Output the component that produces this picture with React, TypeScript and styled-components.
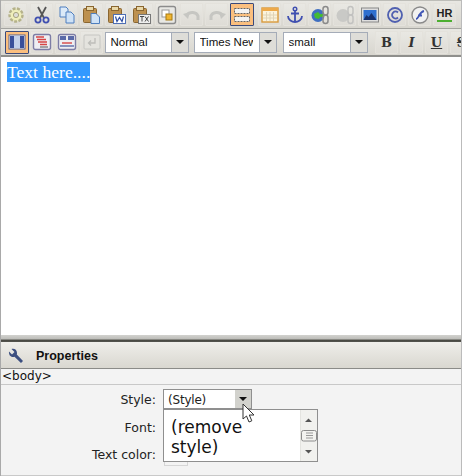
import React from "react";
import styled, { createGlobalStyle } from "styled-components";

const GlobalStyle = createGlobalStyle`
  html, body { margin: 0; padding: 0; background: #fff; }
  * { box-sizing: border-box; }
`;

const Editor = styled.div`
  width: 462px;
  height: 476px;
  display: flex;
  flex-direction: column;
  border-left: 1px solid #a9a9a9;
  border-right: 1px solid #bbb;
  font-family: "DejaVu Sans", Verdana, sans-serif;
  overflow: hidden;
`;

const Toolbars = styled.div`
  flex: none;
  height: 57px;
  background: #d8d6cf;
  border-top: 1px solid #bdbdb8;
  border-bottom: 2px solid #8f8f8c;
  display: flex;
  flex-direction: column;
`;

const ToolRow = styled.div<{ $top?: boolean; $pad: number }>`
  flex: none;
  height: ${(p) => (p.$top ? 28 : 26)}px;
  display: flex;
  align-items: center;
  padding-left: ${(p) => p.$pad}px;
  background: linear-gradient(#e8e7e2, #d8d6cf);
  border-bottom: ${(p) => (p.$top ? "1px solid #a4a4a0" : "none")};
  overflow: hidden;
`;

const ToolButton = styled.div<{ $active?: boolean; $w?: number; $gap?: number; $lead?: number }>`
  flex: none;
  width: ${(p) => p.$w ?? 23}px;
  height: 23px;
  display: flex;
  align-items: center;
  justify-content: center;
  margin-left: ${(p) => p.$lead ?? 0}px;
  margin-right: ${(p) => p.$gap ?? 2}px;
  border: 1px solid ${(p) => (p.$active ? "#3c4a7a" : "#e4e2dc")};
  background: ${(p) => (p.$active ? "#fbbf7e" : "linear-gradient(#e9e8e3, #dedcd6)")};
  border-radius: 1px;
`;

const Combo = styled.div<{ $w: number; $ml: number }>`
  flex: none;
  width: ${(p) => p.$w}px;
  margin-left: ${(p) => p.$ml}px;
  height: 21px;
  display: flex;
  border: 1px solid #a5acb8;
  background: #fff;
`;

const ComboText = styled.div`
  flex: 1;
  min-width: 0;
  overflow: hidden;
  white-space: nowrap;
  margin-left: 4.5px;
  margin-right: 6px;
  font-family: "Liberation Sans", Arial, sans-serif;
  font-size: 11.5px;
  line-height: 19px;
  color: #111;
`;

const ComboArrow = styled.div`
  flex: none;
  width: 17px;
  background: #deddd8;
  border-left: 1px solid #a5acb8;
  display: flex;
  align-items: center;
  justify-content: center;
  &::after {
    content: "";
    border-left: 4px solid transparent;
    border-right: 4px solid transparent;
    border-top: 4px solid #111;
  }
`;

const Canvas = styled.div`
  flex: none;
  height: 278px;
  background: #fff;
  padding: 5px 6px;
  font-family: "Liberation Serif", "Times New Roman", serif;
  font-size: 17.6px;
  line-height: 20px;
`;

const Selected = styled.span`
  background: #3399ff;
  color: #fff;
`;

const Splitter = styled.div`
  flex: none;
  height: 7px;
  background: linear-gradient(#d2d2cf 0, #bcbcb8 60%, #45453f 70%, #55554f 100%);
`;

const PanelHeader = styled.div`
  flex: none;
  height: 27px;
  display: flex;
  align-items: center;
  gap: 12px;
  padding: 2px 0 0 7px;
  background: linear-gradient(#efeeea, #d9d7d0);
  border-bottom: 1px solid #8b8b88;
  font-family: "Liberation Sans", Arial, sans-serif;
  font-size: 12.5px;
  font-weight: bold;
  color: #111;
`;

const PathBar = styled.div`
  flex: none;
  height: 16px;
  background: #f3f3f3;
  border-bottom: 1px solid #c8c8c8;
  padding-left: 1px;
  font-size: 12px;
  line-height: 15px;
  color: #111;
`;

const Form = styled.div`
  flex: 1;
  position: relative;
  background: #f3f3f3;
  padding-top: 4px;
  border-bottom: 1px solid #c9c9c9;
  display: grid;
  grid-template-columns: 155px 1fr;
  grid-auto-rows: 27.5px;
  column-gap: 7px;
  font-size: 12.5px;
  color: #222;
`;

const Label = styled.div`
  text-align: right;
  line-height: 20px;
  padding-top: 1px;
`;

const StyleSelect = styled.div`
  width: 89px;
  height: 20px;
  display: flex;
  border: 1px solid #8f8f8f;
  background: #fff;
  font-size: 12px;
  line-height: 19px;
  color: #222;
`;

const StyleText = styled.div`
  flex: 1;
  padding-left: 4px;
  position: relative;
  top: 1px;
  letter-spacing: -0.2px;
`;

const StyleArrow = styled.div`
  width: 16px;
  background: #d2d2cd;
  display: flex;
  align-items: center;
  justify-content: center;
  &::after {
    content: "";
    border-left: 4px solid transparent;
    border-right: 4px solid transparent;
    border-top: 4px solid #111;
  }
`;

const Swatch = styled.div`
  width: 24px;
  height: 22px;
  margin-left: 1px;
  background: #f3f3f3;
  border: 1px solid #d6d6d6;
`;

const Dropdown = styled.div`
  position: absolute;
  left: 162px;
  top: 24px;
  width: 155px;
  height: 53px;
  display: flex;
  background: #fff;
  border: 1px solid #8f8f8f;
`;

const DropList = styled.div`
  flex: 1;
  padding: 7px 7px;
  font-size: 17px;
  line-height: 20px;
  color: #111;
`;

const ScrollBar = styled.div`
  width: 17px;
  background: #f1f1ee;
  border-left: 1px solid #e4e4e0;
  position: relative;
`;

const ScrollGlyph = styled.svg<{ $top: number }>`
  position: absolute;
  left: 0;
  top: ${(p) => p.$top}px;
`;

const Pointer = styled.svg`
  position: absolute;
  left: 241px;
  top: 18px;
`;

const HrIcon = styled.div`
  font-family: "Liberation Sans", Arial, sans-serif;
  font-size: 11px;
  font-weight: bold;
  line-height: 12px;
  color: #222;
  border-bottom: 2px solid #4caf30;
  padding: 0 0 1px;
`;

const Face = styled.span<{ $italic?: boolean; $under?: boolean; $strike?: boolean }>`
  font-family: "DejaVu Serif", Georgia, serif;
  font-size: 13px;
  font-weight: bold;
  color: #333;
  font-style: ${(p) => (p.$italic ? "italic" : "normal")};
  text-decoration: ${(p) => (p.$under ? "underline" : p.$strike ? "line-through" : "none")};
`;

type IconProps = { children: React.ReactNode };
const Ico = ({ children }: IconProps) => (
  <svg width="20" height="20" viewBox="0 0 20 20">
    {children}
  </svg>
);

const Clipboard = ({ children }: IconProps) => (
  <Ico>
    <rect x="1.5" y="3.5" width="13" height="14" rx="1" fill="#bd9150" stroke="#8a6630" />
    <rect x="4.5" y="1.5" width="7" height="4" fill="#e9d8a8" stroke="#8a6630" />
    {children}
  </Ico>
);

const row1: React.ReactNode[] = [
  <Ico key="cog">
    <circle cx="10" cy="10" r="6.5" fill="#efeebb" stroke="#b5b28a" strokeWidth="2.4" strokeDasharray="3 1.4" />
    <circle cx="10" cy="10" r="2.6" fill="#dedcd6" stroke="#a8a67f" />
  </Ico>,
  <Ico key="cut">
    <path d="M6 2l6 11M14 2L8 13" stroke="#555" strokeWidth="1.8" />
    <circle cx="6" cy="15" r="2.6" fill="none" stroke="#3f4fb0" strokeWidth="1.8" />
    <circle cx="14" cy="15" r="2.6" fill="none" stroke="#3f4fb0" strokeWidth="1.8" />
  </Ico>,
  <Ico key="copy">
    <path d="M3 2h6l2 2v8H3z" fill="#dceaf8" stroke="#4f7fbf" />
    <path d="M9 7h5l3 3v8H9z" fill="#cfe2f6" stroke="#4f7fbf" />
  </Ico>,
  <Clipboard key="paste">
    <path d="M9 8.5h5l3.500 3.500v6.500H9z" fill="#cfe2f6" stroke="#4f7fbf" />
  </Clipboard>,
  <Clipboard key="word">
    <rect x="6.5" y="9.500" width="12" height="9" fill="#fff" stroke="#4f6fb5" />
    <path d="M8.500 11.500l1.500 5 2.500-4 2.500 4 1.500-5" fill="none" stroke="#2f4fa5" strokeWidth="1.200" />
  </Clipboard>,
  <Clipboard key="text">
    <rect x="6.5" y="9.500" width="12" height="9" fill="#eee" stroke="#777" />
    <path d="M8 11.500h4M10 11.500v5M13 11.500l3.500 5M16.500 11.500l-3.500 5" fill="none" stroke="#444" />
  </Clipboard>,
  <Ico key="selectall">
    <rect x="1.500" y="1.500" width="17" height="17" rx="2" fill="#e8e8e4" stroke="#8c8c8c" strokeWidth="1.400" />
    <rect x="5" y="5" width="7" height="7" fill="#fff" stroke="#999" />
    <rect x="9" y="9" width="6" height="6" fill="#efb530" stroke="#a87a10" />
  </Ico>,
  <Ico key="undo">
    <path d="M5 10a6 5 0 0 1 11 1v4" fill="none" stroke="#c6c6c2" strokeWidth="3" />
    <path d="M1 9l7-2-2 7z" fill="#c6c6c2" />
  </Ico>,
  <Ico key="redo">
    <path d="M15 10a6 5 0 0 0-11 1v4" fill="none" stroke="#c6c6c2" strokeWidth="3" />
    <path d="M19 9l-7-2 2 7z" fill="#c6c6c2" />
  </Ico>,
  <Ico key="div">
    <rect x="2.500" y="3.500" width="15" height="5" fill="#f3f3f3" stroke="#666" strokeDasharray="2 1" />
    <rect x="2.500" y="11.500" width="15" height="5" fill="#f3f3f3" stroke="#666" strokeDasharray="2 1" />
  </Ico>,
  <Ico key="table">
    <rect x="2" y="3" width="16" height="14" fill="#fbf3dc" stroke="#d99a3c" strokeWidth="1.400" />
    <rect x="2" y="3" width="16" height="3" fill="#eda94a" />
    <path d="M6.500 7v9M10 7v9M13.500 7v9M3 10h14M3 13h14" stroke="#e0d4b8" />
  </Ico>,
  <Ico key="anchor">
    <circle cx="10" cy="4" r="1.800" fill="none" stroke="#3f4fb0" strokeWidth="1.400" />
    <path d="M10 6v11M6 8.500h8M3 11c0 4 4 6 7 6s7-2 7-6" fill="none" stroke="#3f4fb0" strokeWidth="1.800" />
  </Ico>,
  <Ico key="link">
    <circle cx="8" cy="10.500" r="6.500" fill="#3f6fc0" />
    <path d="M4 9l4-2 2 2h4v3h-4l-1 2-4-1z" fill="#44bb33" />
    <rect x="13" y="1.500" width="5" height="8.500" rx="2.500" fill="none" stroke="#8a8a8a" strokeWidth="1.500" />
    <rect x="13" y="10" width="5" height="8.500" rx="2.500" fill="none" stroke="#8a8a8a" strokeWidth="1.500" />
  </Ico>,
  <Ico key="unlink">
    <circle cx="8" cy="10.500" r="6.500" fill="#c9c9c6" />
    <rect x="13" y="1.500" width="5" height="8.500" rx="2.500" fill="none" stroke="#c2c2c0" strokeWidth="1.500" />
    <rect x="13" y="10" width="5" height="8.500" rx="2.500" fill="none" stroke="#c2c2c0" strokeWidth="1.500" />
  </Ico>,
  <Ico key="image">
    <rect x="1.500" y="3" width="17" height="14" fill="#dedede" stroke="#888" />
    <rect x="3.500" y="5" width="13" height="10" fill="#2f6fd0" />
    <path d="M3.500 15l3-5 2 2 3-4 5 7z" fill="#17306e" />
  </Ico>,
  <Ico key="copyright">
    <circle cx="10" cy="10" r="7" fill="none" stroke="#5060b0" strokeWidth="1.800" />
    <path d="M13 7.500a3.500 3.500 0 1 0 0 5" fill="none" stroke="#5060b0" strokeWidth="1.800" />
  </Ico>,
  <Ico key="flash">
    <circle cx="10" cy="10" r="8" fill="#f1f1f1" stroke="#8a8a8a" strokeWidth="1.400" />
    <path d="M6 14c3 0 3-7 8-8M8 10.500h4" fill="none" stroke="#3f55b5" strokeWidth="1.900" />
  </Ico>,
];

const row2: React.ReactNode[] = [
  <Ico key="source">
    <rect x="2" y="3" width="16" height="14" fill="#fff" stroke="#55608f" />
    <rect x="3" y="4" width="4" height="12" fill="#3a4f9a" />
    <rect x="13" y="4" width="4" height="12" fill="#3a4f9a" />
    <rect x="7" y="4" width="6" height="12" fill="#c3d0ea" />
  </Ico>,
  <Ico key="styles">
    <rect x="1.500" y="2.500" width="17" height="15" rx="2" fill="#eeeef2" stroke="#7d7da5" strokeWidth="1.400" />
    <path d="M4 5h8M5 7.500h9M6 10h9M8 12.500h7" stroke="#d64545" strokeWidth="1.500" />
    <path d="M8 15h8" stroke="#555" />
  </Ico>,
  <Ico key="layout">
    <rect x="1.500" y="2.500" width="17" height="15" rx="2" fill="#eeeef2" stroke="#7d7da5" strokeWidth="1.400" />
    <rect x="3" y="4" width="6" height="4" fill="#5a6aa8" />
    <rect x="11" y="4" width="6" height="4" fill="#5a6aa8" />
    <path d="M5 11h10" stroke="#d64545" strokeWidth="1.400" />
    <path d="M3 14h14" stroke="#5a6aa8" strokeWidth="1.400" />
  </Ico>,
  <Ico key="return">
    <rect x="2" y="3" width="16" height="14" rx="1" fill="#e4e3de" stroke="#c6c6c2" />
    <path d="M13 6v5H7M9 8.500L6.500 11 9 13.500" fill="none" stroke="#bdbdb9" strokeWidth="1.300" />
  </Ico>,
];

// spacing in the first row is uneven: a wider gap after the first and the active button
const row1Gap = (i: number) => (i === 0 ? 3 : i === 9 ? 4 : 2);

export default function App() {
  return (
    <>
      <GlobalStyle />
      <Editor>
        <Toolbars>
          <ToolRow $top $pad={3}>
            {row1.map((icon, i) => (
              <ToolButton key={i} $active={i === 9} $gap={row1Gap(i)} $w={i === 9 ? 24 : 23}>
                {icon}
              </ToolButton>
            ))}
            <ToolButton>
              <HrIcon>HR</HrIcon>
            </ToolButton>
          </ToolRow>
          <ToolRow $pad={4}>
            {row2.map((icon, i) => (
              <ToolButton key={i} $active={i === 0} $w={i === 0 ? 24 : 23} $gap={i === 0 ? 1 : 2}>
                {icon}
              </ToolButton>
            ))}
            <Combo $w={84} $ml={0}>
              <ComboText>Normal</ComboText>
              <ComboArrow />
            </Combo>
            <Combo $w={83} $ml={5}>
              <ComboText>Times New Roman</ComboText>
              <ComboArrow />
            </Combo>
            <Combo $w={85} $ml={6}>
              <ComboText>small</ComboText>
              <ComboArrow />
            </Combo>
            <ToolButton $lead={7}>
              <Face>B</Face>
            </ToolButton>
            <ToolButton>
              <Face $italic>I</Face>
            </ToolButton>
            <ToolButton>
              <Face $under>U</Face>
            </ToolButton>
            <ToolButton>
              <Face $strike>S</Face>
            </ToolButton>
          </ToolRow>
        </Toolbars>
        <Canvas>
          <Selected>Text here....</Selected>
        </Canvas>
        <Splitter />
        <PanelHeader>
          <svg width="16" height="16" viewBox="0 0 16 16">
            <path d="M1 3.500L4 6.500 6.500 4 3.500 1C6 0 9 1.500 9 5c0 .6 0 1-.2 1.500L15 13l-2 2-6.500-6.200C3 10 .5 7 1 3.500z" fill="#3c4f80" />
          </svg>
          Properties
        </PanelHeader>
        <PathBar>&lt;body&gt;</PathBar>
        <Form>
          <Label>Style:</Label>
          <StyleSelect>
            <StyleText>(Style)</StyleText>
            <StyleArrow />
          </StyleSelect>
          <Label>Font:</Label>
          <div />
          <Label>Text color:</Label>
          <Swatch />
          <Dropdown>
            <DropList>
              (remove
              <br />
              style)
            </DropList>
            <ScrollBar>
              <ScrollGlyph $top={6} width="15" height="8" viewBox="0 0 15 8">
                <path d="M4 6l3.500-3.500L11 6z" fill="#555" />
              </ScrollGlyph>
              <ScrollGlyph $top={20} width="16" height="12" viewBox="0 0 16 12">
                <rect x=".5" y=".5" width="15" height="10.500" rx="2" fill="#f3f3f0" stroke="#8c8c8c" />
                <path d="M5 3h7M5 5.500h7M5 8h7" stroke="#999" />
              </ScrollGlyph>
              <ScrollGlyph $top={38} width="15" height="8" viewBox="0 0 15 8">
                <path d="M4 2l3.500 3.500L11 2z" fill="#555" />
              </ScrollGlyph>
            </ScrollBar>
          </Dropdown>
          <Pointer width="14" height="20" viewBox="0 0 14 20">
            <path d="M1 1v15l3.500-3 2.500 6 2.800-1.200-2.500-5.800H12z" fill="#fff" stroke="#333" strokeWidth="1" />
          </Pointer>
        </Form>
      </Editor>
    </>
  );
}
